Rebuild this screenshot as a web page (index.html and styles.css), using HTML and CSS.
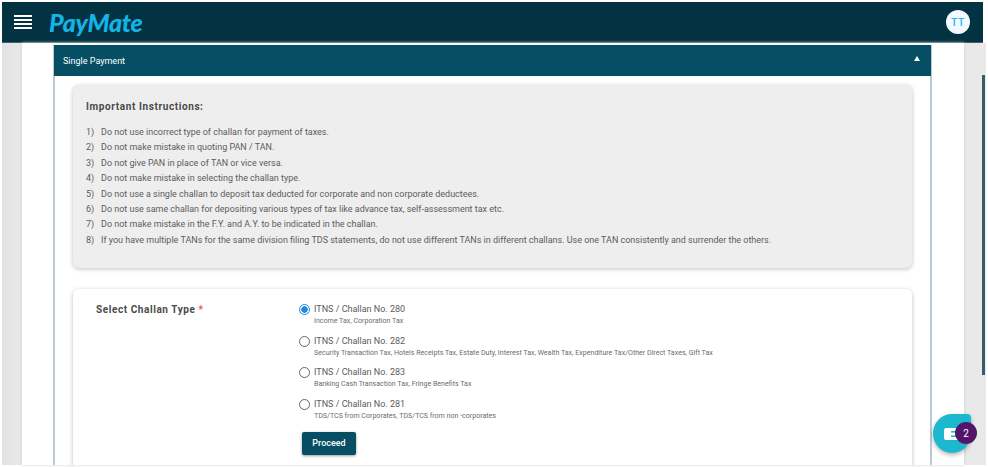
FILE: index.html
```html
<!DOCTYPE html>
<html lang="en">
<head>
<meta charset="utf-8">
<title>PayMate</title>
<link rel="stylesheet" href="styles.css">
</head>
<body>
<div class="top-edge"></div>
<header class="topbar">
  <div class="burger"><span></span><span></span><span></span><span></span></div>
  <div class="logo">PayMate</div>
  <div class="avatar">TT</div>
</header>
<div class="stage">
  <div class="sheet">
    <section class="panel">
      <div class="panel-head"><span>Single Payment</span><i class="caret"></i></div>
      <div class="panel-body">
        <div class="card notes">
          <h2>Important Instructions:</h2>
          <ol>
            <li><b>1)</b>Do not use incorrect type of challan for payment of taxes.</li>
            <li><b>2)</b>Do not make mistake in quoting PAN / TAN.</li>
            <li><b>3)</b>Do not give PAN in place of TAN or vice versa.</li>
            <li><b>4)</b>Do not make mistake in selecting the challan type.</li>
            <li><b>5)</b>Do not use a single challan to deposit tax deducted for corporate and non corporate deductees.</li>
            <li><b>6)</b>Do not use same challan for depositing various types of tax like advance tax, self-assessment tax etc.</li>
            <li><b>7)</b>Do not make mistake in the F.Y. and A.Y. to be indicated in the challan.</li>
            <li><b>8)</b>If you have multiple TANs for the same division filing TDS statements, do not use different TANs in different challans. Use one TAN consistently and surrender the others.</li>
          </ol>
        </div>
        <div class="card form">
          <div class="form-label">Select Challan Type <em>*</em></div>
          <div class="options">
            <div class="option"><i class="radio on"></i><div><p>ITNS / Challan No. 280</p><small>Income Tax, Corporation Tax</small></div></div>
            <div class="option"><i class="radio"></i><div><p>ITNS / Challan No. 282</p><small>Security Transaction Tax, Hotels Receipts Tax, Estate Duty, Interest Tax, Wealth Tax, Expenditure Tax/Other Direct Taxes, Gift Tax</small></div></div>
            <div class="option"><i class="radio"></i><div><p>ITNS / Challan No. 283</p><small>Banking Cash Transaction Tax, Fringe Benefits Tax</small></div></div>
            <div class="option"><i class="radio"></i><div><p>ITNS / Challan No. 281</p><small>TDS/TCS from Corporates, TDS/TCS from non -corporates</small></div></div>
            <button class="proceed">Proceed</button>
          </div>
        </div>
      </div>
    </section>
  </div>
  <div class="scroll-thumb"></div>
</div>
<div class="chat">
  <svg width="16" height="12" viewBox="0 0 16 12"><rect x="0" y="0" width="16" height="12" rx="2" fill="#fff"/><rect x="7" y="3" width="9" height="1.6" fill="#1cb8d0"/><rect x="7" y="7.4" width="9" height="1.6" fill="#1cb8d0"/></svg>
  <span class="badge">2</span>
</div>
</body>
</html>
```
FILE: styles.css
```css
* { box-sizing: border-box; }
html, body { margin: 0; padding: 0; height: 467px; overflow: hidden; }
body { background: #fff; font-family: Roboto, "Liberation Sans", sans-serif; color: #4a4a4a; }
.top-edge { height: 2px; background: #fff; }
.topbar {
  height: 41px; margin: 0 5px 0 2px; background: #033343;
  display: flex; align-items: center; padding: 0 13px 0 12px;
  border-bottom: 1px solid #40606c;
}
.burger { width: 18px; display: flex; flex-direction: column; gap: 2px; }
.burger span { height: 2px; background: #fff; }
.logo { margin-left: 17px; font: italic 900 25px Lato, sans-serif; color: #12b5e5; line-height: 30px; letter-spacing: -.3px; }
.avatar {
  margin-left: auto; width: 24px; height: 24px; border-radius: 50%; background: #f2f9ff;
  color: #2cb6ee; font-size: 10.5px; font-weight: 500; letter-spacing: .5px;
  display: flex; align-items: center; justify-content: center;
}
.stage { height: 422px; margin: 0 2px 0 2px; background: linear-gradient(90deg, #e2e2e2, #e9e9e9 20px); position: relative; padding-left: 20px; }
.sheet { width: 942px; height: 422px; padding: 2px 32px 0 31px; background: #fff; box-shadow: 0 0 3px #ccc; overflow: hidden; opacity: .999; }
.panel { border-left: 2px solid #b9c8d2; border-right: 2px solid #b9c8d2; height: 460px; }
.panel-head {
  height: 31px; margin: 0 -1px; background: #064e64; color: #fff; font-size: 9px;
  display: flex; align-items: center; justify-content: space-between; padding: 0 11px 0 9px;
}
.caret { width: 0; height: 0; border-left: 3.5px solid transparent; border-right: 3.5px solid transparent; border-bottom: 5px solid #fff; margin-bottom: 5px; }
.panel-body { padding: 9px 18px 0 18px; }
.card { background: #fff; border-radius: 6px; box-shadow: 0 1px 4px rgba(0,0,0,.25); }
.notes { background: #eee; height: 183px; padding: 15px 13px 0 13px; }
.notes h2 { margin: 0 0 11px; font-size: 10px; font-weight: 700; line-height: 14px; letter-spacing: .6px; color: #4a4a4a; }
.notes ol { margin: 0; padding: 0; list-style: none; }
.notes li { font-size: 8.97px; line-height: 15.4px; color: #5c5c5c; display: flex; white-space: nowrap; }
.notes li b { font-weight: 400; width: 15px; flex: none; }
.form { margin-top: 21px; height: 200px; padding: 14px 23px; display: flex; }
.form-label { width: 203px; font-size: 10px; font-weight: 700; letter-spacing: .58px; color: #4a4a4a; line-height: 14px; }
.form-label em { font-style: normal; color: #e8505b; }
.options { display: flex; flex-direction: column; }
.option { display: flex; height: 31.7px; }
.option p { margin: 0; font-size: 9px; line-height: 13px; color: #5c5c5c; }
.option small { display: block; font-size: 7.07px; line-height: 10px; color: #6c6c6c; white-space: nowrap; }
.radio { width: 11px; height: 11px; border-radius: 50%; border: 1px solid #666; margin: 1px 4px 0 0; flex: none; background: #fff; }
.radio.on { border-color: #1e88e5; background: radial-gradient(circle, #1e88e5 0 3px, #fff 3.4px); }
.proceed {
  width: 54px; height: 23px; margin: 2px 0 0 3px; border: 0; border-radius: 2px; background: #064e64; color: #fff;
  font: 500 9px Roboto, sans-serif; padding: 0; box-shadow: 0 1px 3px rgba(0,0,0,.4);
}
.scroll-thumb { position: absolute; right: 1px; top: 32px; width: 3px; height: 300px; background: #3d5a68; }
.chat {
  position: absolute; left: 933px; top: 414px; width: 38px; height: 39px;
  border-radius: 50% 4px 50% 50%; background: #1cb8d0; box-shadow: 0 2px 4px rgba(0,0,0,.3);
  display: flex; align-items: center; padding-left: 11px;
}
.badge {
  position: absolute; left: 22px; top: 8px; width: 22px; height: 22px; border-radius: 50%;
  background: #52156b; color: #fff; font-size: 10px; display: flex; align-items: center; justify-content: center;
}
```
